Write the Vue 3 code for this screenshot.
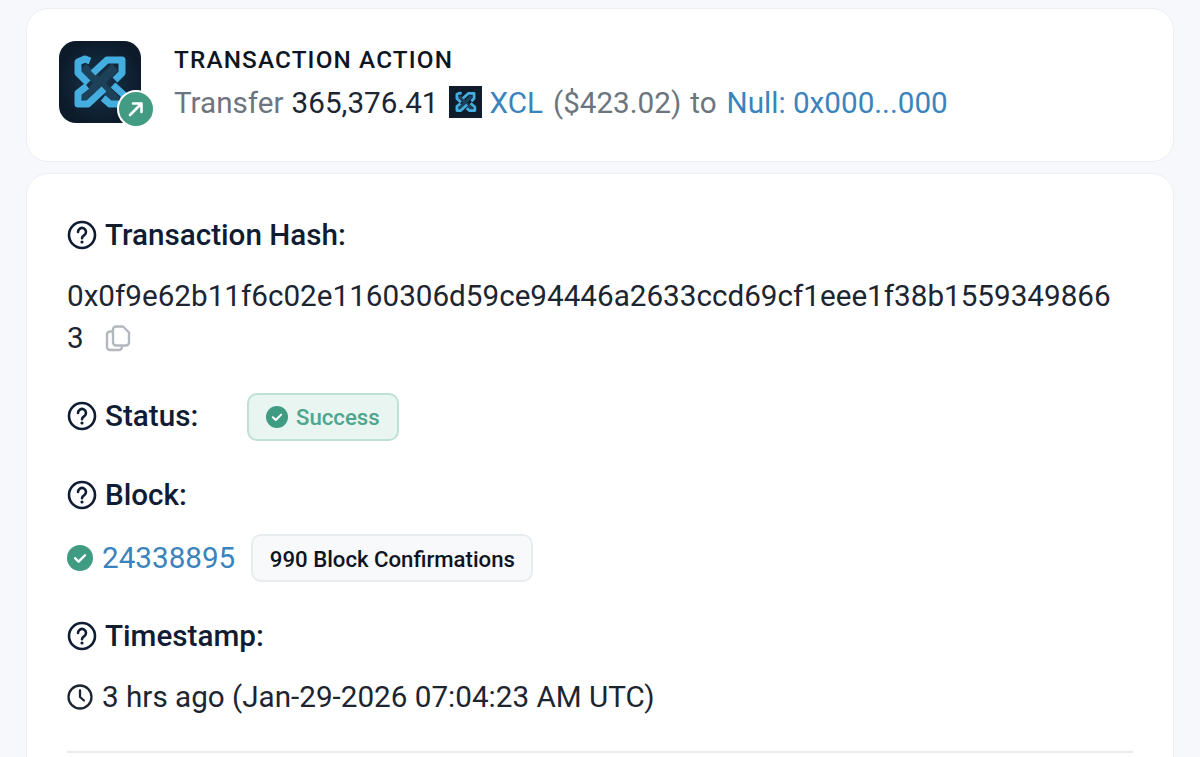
<template>
  <div class="page">
    <svg class="defs" width="0" height="0">
      <symbol id="xcl" viewBox="0 0 82 82">
        <g fill="none" stroke-linejoin="round">
          <path d="M24 26L58 60M56 26L24 59" stroke="#1d4159" stroke-width="9" />
          <g stroke="#45aee0" stroke-width="7">
            <path d="M31 20L26 18L19 21V32L29 42" />
            <path d="M34 32L48 19H63V32L56 39" />
            <path d="M28 45L19 52V63H29L45 48" />
            <path d="M54 44L65 54V63H51L44 57" />
          </g>
        </g>
      </symbol>
      <symbol id="help" viewBox="0 0 30 30">
        <circle cx="15" cy="15" r="13" fill="none" stroke="#0f1c33" stroke-width="2.6" />
        <path d="M11 12a4 4 0 1 1 6.3 3.2c-1.5 1-2.3 1.6-2.3 3" fill="none" stroke="#0f1c33" stroke-width="2.6" stroke-linecap="round" />
        <circle cx="15" cy="22" r="1.6" fill="#0f1c33" />
      </symbol>
    </svg>

    <section class="card action">
      <div class="logo-wrap">
        <div class="logo">
          <svg width="82" height="82"><use href="#xcl" /></svg>
        </div>
        <span class="badge">
          <svg width="20" height="20" viewBox="0 0 20 20" fill="none" stroke="#fff" stroke-width="2.6" stroke-linecap="round" stroke-linejoin="round">
            <path d="M4 16L15.5 4.5M7 4.5H15.5V13" />
          </svg>
        </span>
      </div>
      <div class="action-text">
        <div class="action-title">TRANSACTION ACTION</div>
        <div class="action-line">
          <span class="muted">Transfer</span>
          <span class="amount">365,376.41</span>
          <span class="token"><svg width="33" height="32"><use href="#xcl" /></svg></span>
          <a class="link">XCL</a>
          <span class="muted price">($423.02)</span>
          <span class="muted">to</span>
          <a class="link null">Null: 0x000...000</a>
        </div>
      </div>
    </section>

    <section class="card details">
      <div class="label">
        <svg class="help" width="30" height="30"><use href="#help" /></svg>
        <span>Transaction Hash:</span>
      </div>
      <div class="hash">
        0x0f9e62b11f6c02e1160306d59ce94446a2633ccd69cf1eee1f38b15593498663
        <svg class="copy" width="30" height="30" viewBox="0 0 30 30" fill="none" stroke="#b4b8be" stroke-width="2.4" stroke-linejoin="round">
          <path d="M10 6.5a3 3 0 0 1 3-3h7l6 6v10a3 3 0 0 1-3 3H13a3 3 0 0 1-3-3z" />
          <path d="M10 8.5H7a3 3 0 0 0-3 3V24a3 3 0 0 0 3 3h9a3 3 0 0 0 3-3v-2" />
        </svg>
      </div>

      <div class="status-row">
        <div class="label status-label">
          <svg class="help" width="30" height="30"><use href="#help" /></svg>
          <span>Status:</span>
        </div>
        <div class="success">
          <svg width="22" height="22" viewBox="0 0 22 22"><circle cx="11" cy="11" r="11" fill="#3f9c82" /><path d="M6.8 11.2l3 2.8 5.4-5.4" fill="none" stroke="#fff" stroke-width="2" stroke-linecap="round" stroke-linejoin="round" /></svg>
          <span>Success</span>
        </div>
      </div>

      <div class="label block-label">
        <svg class="help" width="30" height="30"><use href="#help" /></svg>
        <span>Block:</span>
      </div>
      <div class="block-row">
        <svg width="26" height="26" viewBox="0 0 26 26"><circle cx="13" cy="13" r="13" fill="#3f9c82" /><path d="M8 13.2l3.6 3.4 6.4-6.4" fill="none" stroke="#fff" stroke-width="2.3" stroke-linecap="round" stroke-linejoin="round" /></svg>
        <a class="link block-no">24338895</a>
        <span class="confirm">990 Block Confirmations</span>
      </div>

      <div class="label time-label">
        <svg class="help" width="30" height="30"><use href="#help" /></svg>
        <span>Timestamp:</span>
      </div>
      <div class="time-row">
        <svg width="26" height="26" viewBox="0 0 26 26" fill="none" stroke="#1d2530" stroke-width="2.3" stroke-linecap="round" stroke-linejoin="round">
          <circle cx="13" cy="13" r="11.5" />
          <path d="M13 6.5V13l4 3.5" />
        </svg>
        <span>3 hrs ago (Jan-29-2026 07:04:23 AM UTC)</span>
      </div>
      <hr class="divider" />
    </section>
  </div>
</template>

<script setup>
</script>

<style>
html, body {
  margin: 0;
  height: 757px;
  overflow: hidden;
  background: #f7f8fb;
}
</style>

<style scoped>
.page {
  height: 757px;
  overflow: hidden;
  box-sizing: border-box;
  padding: 8px 26px 0;
  font-family: Roboto, "Liberation Sans", sans-serif;
  color: #1d2530;
  font-size: 29.65px;
}
.defs {
  position: absolute;
}
.card {
  background: #fff;
  border: 1.5px solid #eceef3;
  border-radius: 22px;
  box-sizing: border-box;
}
.action {
  height: 154px;
  display: flex;
  align-items: center;
  gap: 33px;
  padding-left: 32px;
}
.logo-wrap {
  position: relative;
  width: 82px;
  height: 82px;
  margin-top: -6px;
}
.logo {
  width: 82px;
  height: 82px;
  border-radius: 17px;
  overflow: hidden;
  background: radial-gradient(circle, #17344c 0%, #0c1a29 75%);
}
.logo svg {
  display: block;
}
.badge {
  position: absolute;
  right: -14px;
  bottom: -5px;
  width: 38px;
  height: 38px;
  box-sizing: border-box;
  border: 2.5px solid #fff;
  border-radius: 50%;
  background: #429c83;
  display: flex;
  align-items: center;
  justify-content: center;
}
.action-text {
  margin-top: -2px;
}
.action-title {
  font-size: 24.3px;
  font-weight: 500;
  letter-spacing: 1.15px;
  color: #0d1522;
  line-height: 28px;
  margin-top: -4px;
}
.action-line {
  display: flex;
  align-items: center;
  gap: 9px;
  margin-top: 12px;
  line-height: 33px;
}
.amount {
  margin-left: -1px;
}
.price,
.null {
  margin-left: 1px;
}
.muted {
  color: #6c757e;
}
.link {
  color: #3a83bd;
}
.token {
  width: 33px;
  height: 32px;
  margin: 0 -1px 0 1px;
  background: #0e1c2c;
}
.token svg {
  display: block;
}
.details {
  margin-top: 11px;
  height: 620px;
  padding: 41px 40px 0;
}
.label {
  display: flex;
  align-items: center;
  gap: 8px;
  font-weight: 500;
  color: #0f1c33;
  line-height: 40px;
}
.help {
  flex: none;
}
.hash {
  margin-top: 20px;
  width: 1050px;
  word-break: break-all;
  line-height: 42px;
}
.copy {
  vertical-align: -5px;
  margin-left: 12px;
}
.status-row {
  display: flex;
  align-items: center;
  margin-top: 34px;
}
.status-label {
  width: 180px;
  margin-top: -2px;
}
.success {
  display: flex;
  align-items: center;
  gap: 8px;
  height: 48px;
  box-sizing: border-box;
  padding: 0 17px;
  font-size: 22.2px;
  font-weight: 500;
  color: #4fa58d;
  background: #e8f5f1;
  border: 2px solid #bfe0d6;
  border-radius: 10px;
}
.block-label {
  margin-top: 34px;
}
.block-row {
  display: flex;
  align-items: center;
  margin-top: 19px;
  gap: 9px;
}
.block-no {
  margin-top: -2px;
}
.confirm {
  margin-left: 7px;
  height: 48px;
  box-sizing: border-box;
  padding: 1px 16.5px 0;
  display: flex;
  align-items: center;
  font-size: 22.2px;
  font-weight: 500;
  color: #0d1522;
  background: #f8f9fa;
  border: 2px solid #e9ecef;
  border-radius: 10px;
}
.time-label {
  margin-top: 34px;
}
.time-row {
  display: flex;
  align-items: center;
  gap: 9px;
  margin-top: 21px;
  line-height: 40px;
}
.divider {
  border: 0;
  border-top: 2px solid #e9ecef;
  margin: 34px 0 0;
}
</style>
